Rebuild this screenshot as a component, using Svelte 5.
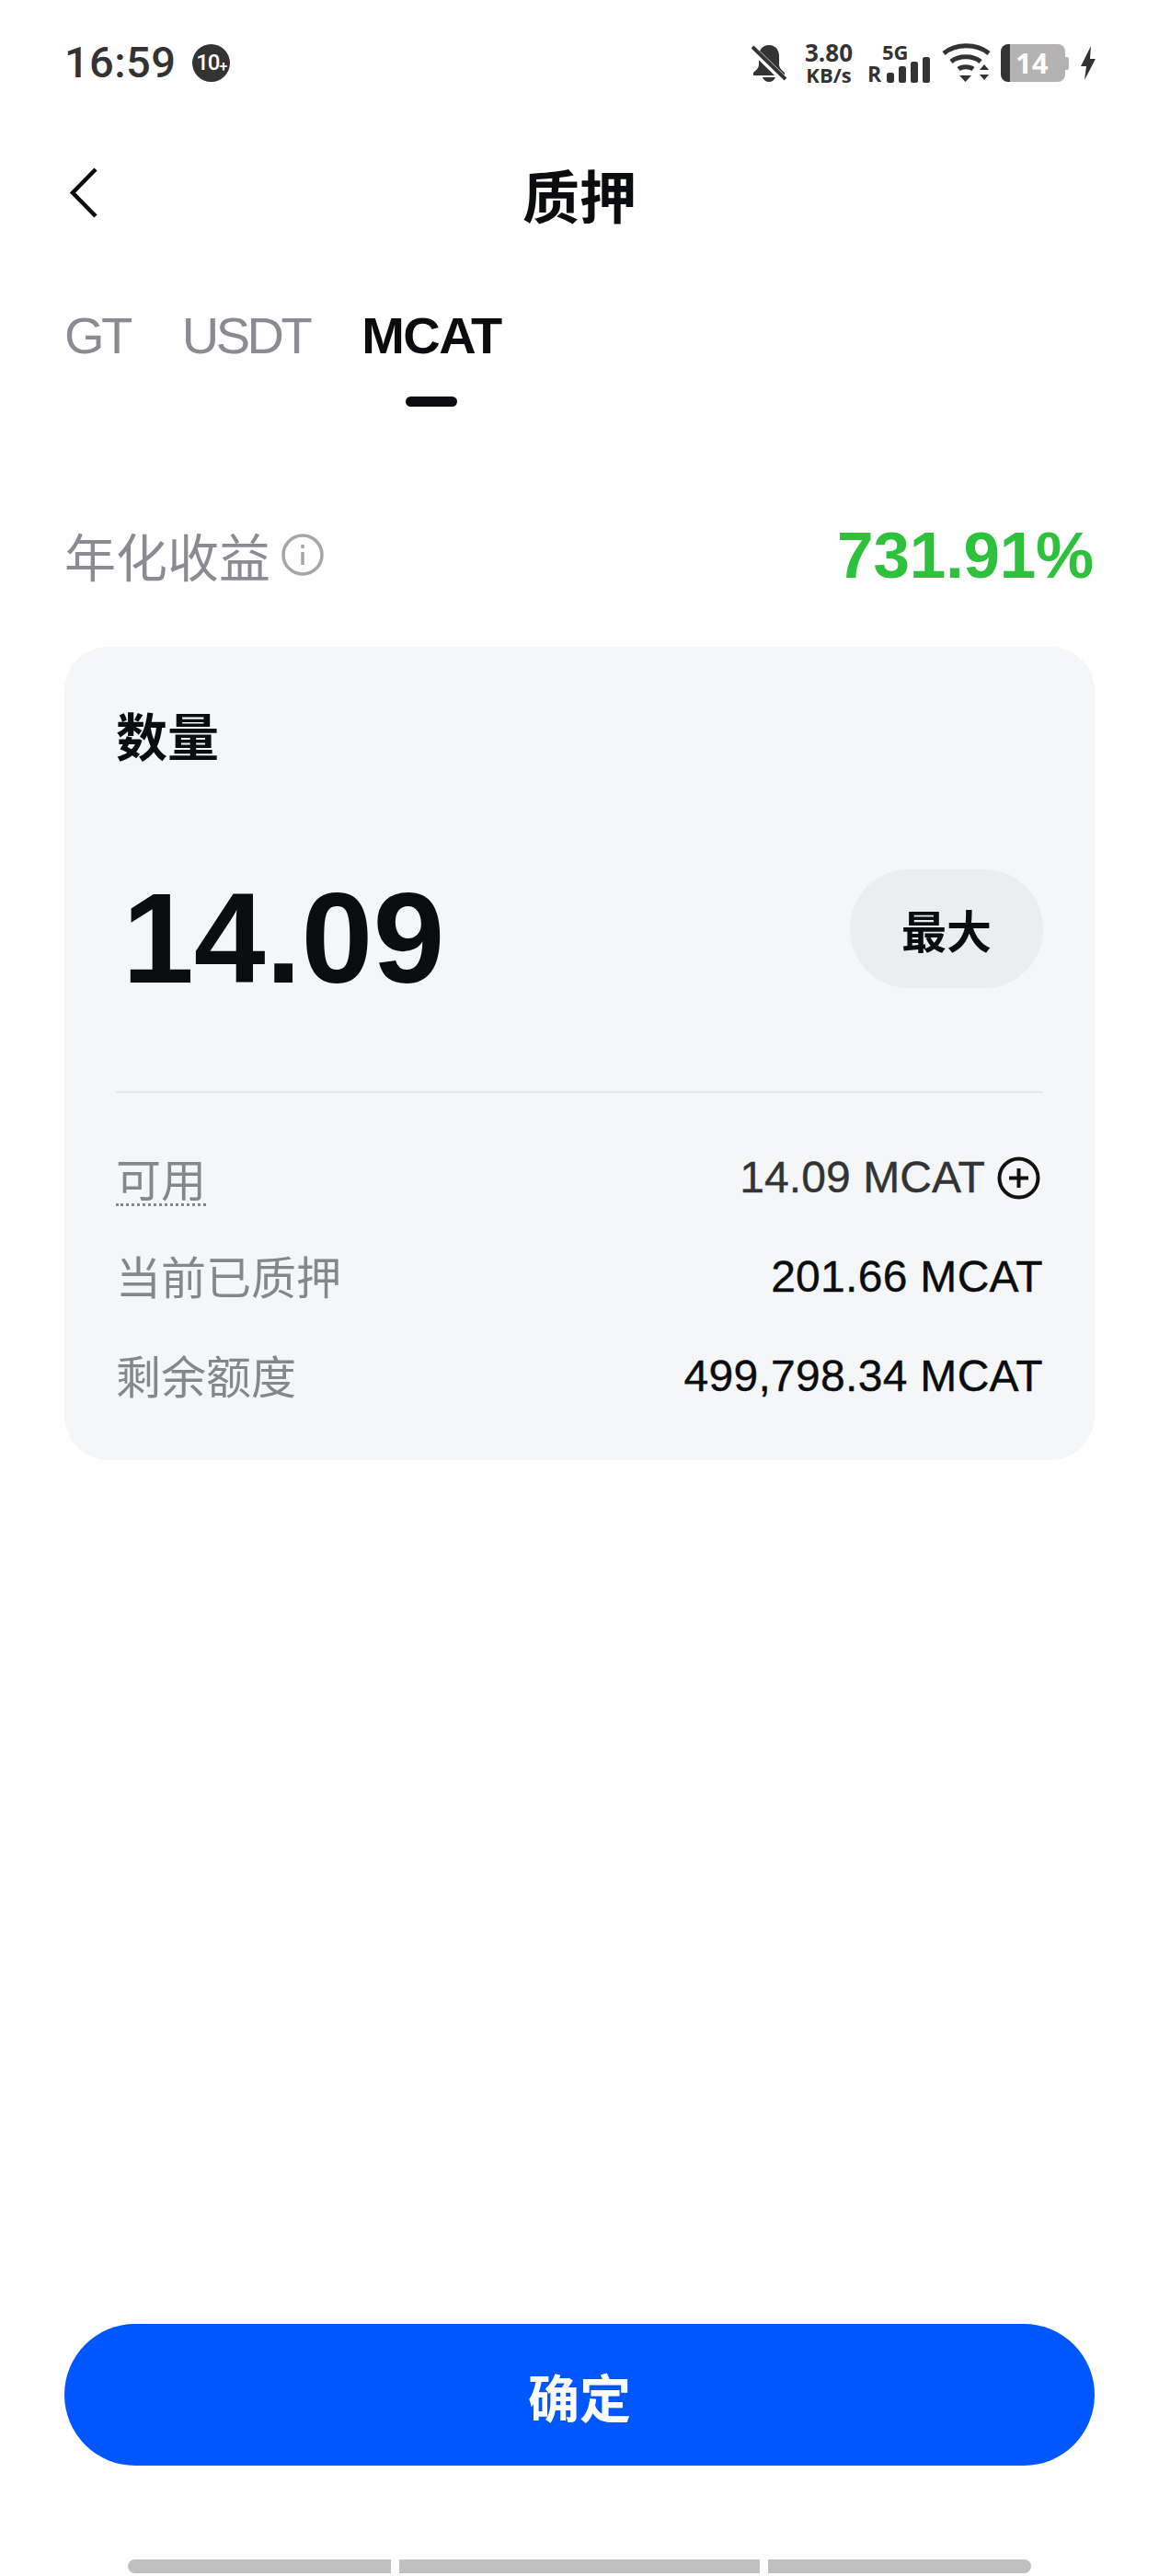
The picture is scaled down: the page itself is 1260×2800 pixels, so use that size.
<script>
  let tabs = ["GT", "USDT", "MCAT"];
  let active = "MCAT";
  let rows = [
    { label: "当前已质押", value: "201.66 MCAT" },
    { label: "剩余额度", value: "499,798.34 MCAT" },
  ];
</script>

<main class="page">
  <header class="status">
    <div class="status-left">
      <span class="time">16:59</span>
      <span class="badge">10<i>+</i></span>
    </div>
    <div class="status-right">
      <svg class="bell" width="38" height="41" viewBox="0 0 38 41">
        <path d="M19 1c7 0 11 5 11 12v9c0 4 3 6 6 9v3H2v-3c3-3 6-5 6-9v-9C8 6 12 1 19 1z" fill="#333" />
        <path d="M12 36h14c-1 3-4 5-7 5s-6-2-7-5z" fill="#333" />
        <path d="M1 5l36 35" stroke="#fff" stroke-width="8" />
        <path d="M1 3l36 35" stroke="#333" stroke-width="4" />
      </svg>
      <div class="speed"><b>3.80</b><b class="unit">KB/s</b></div>
      <div class="signal">
        <span class="five-g">5G</span>
        <span class="roam">R</span>
        <svg width="48" height="28" viewBox="0 0 48 28" fill="#333">
          <rect x="0" y="17" width="8" height="11" rx="2.5" />
          <rect x="13" y="10" width="8" height="18" rx="2.5" />
          <rect x="26" y="5" width="8" height="23" rx="2.5" />
          <rect x="39" y="0" width="8" height="28" rx="2.5" />
        </svg>
      </div>
      <svg class="wifi" width="53" height="42" viewBox="0 0 53 42" fill="none" stroke="#333" stroke-width="5">
        <path d="M2 11C15 0 38 0 51 11" />
        <path d="M10 20C18 13 34 13 42 20" />
        <path d="M18 28c4-3 12-3 16 0" />
        <path d="M19 35h13l-6.500 7z" fill="#333" stroke="none" />
        <path d="M41 29l5-6 5 6zM41 34h10l-5 6z" fill="#333" stroke="none" />
      </svg>
      <div class="battery"><span class="level"></span><span class="pct">14</span><span class="cap"></span></div>
      <svg class="bolt" width="16" height="37" viewBox="0 0 16 37">
        <path d="M11 0L0 22h6L4 37 16 14h-6z" fill="#333" />
      </svg>
    </div>
  </header>

  <nav class="nav">
    <svg class="back" width="31" height="55" viewBox="0 0 31 55" fill="none" stroke="#0a0c0d" stroke-width="4.500">
      <path d="M29 2L4 27.500 29 53" />
    </svg>
    <h1>质押</h1>
  </nav>

  <div class="tabs">
    {#each tabs as tab}
      <div class="tab" class:active={tab === active}>{tab}</div>
    {/each}
  </div>

  <div class="rate">
    <div class="rate-label">
      <span>年化收益</span>
      <svg width="46" height="46" viewBox="0 0 46 46" fill="none" stroke="#a4a6aa" stroke-width="3.500">
        <circle cx="23" cy="23" r="21" />
        <path d="M23 20v14" />
        <path d="M23 12v4" />
      </svg>
    </div>
    <div class="rate-value">731.91%</div>
  </div>

  <section class="card">
    <div class="card-title">数量</div>
    <div class="amount-row">
      <div class="amount">14.09</div>
      <button class="max">最大</button>
    </div>
    <div class="line"></div>
    <div class="row first">
      <span class="label dotted">可用</span>
      <span class="value dim">14.09 MCAT<svg width="47" height="47" viewBox="0 0 47 47" fill="none" stroke="#111" stroke-width="4">
          <circle cx="23.500" cy="23.500" r="21" />
          <path d="M13 23.500h21M23.500 13v21" />
        </svg></span>
    </div>
    {#each rows as row}
      <div class="row">
        <span class="label">{row.label}</span>
        <span class="value">{row.value}</span>
      </div>
    {/each}
  </section>

  <button class="confirm">确定</button>

  <div class="gesture">
    <span></span><span></span><span></span>
  </div>
</main>

<style>
  :global(body) {
    margin: 0;
    background: #fff;
  }

  .page {
    width: 1260px;
    height: 2800px;
    display: flex;
    flex-direction: column;
    box-sizing: border-box;
    padding: 0 70px;
    font-family: "Liberation Sans", "Noto Sans CJK SC", sans-serif;
    color: #0a0c0d;
    overflow: hidden;
  }

  .status {
    height: 136px;
    display: flex;
    justify-content: space-between;
    align-items: center;
    color: #333;
  }

  .status-left {
    display: flex;
    align-items: center;
    gap: 18px;
  }

  .time {
    font-family: Roboto, sans-serif;
    font-weight: 500;
    font-size: 47px;
    letter-spacing: 0.4px;
    line-height: 50px;
  }

  .badge {
    width: 41px;
    height: 41px;
    border-radius: 50%;
    background: #333;
    color: #fff;
    font-family: Roboto, sans-serif;
    font-size: 24px;
    font-weight: 500;
    letter-spacing: -1px;
    display: flex;
    align-items: center;
    justify-content: center;
  }

  .badge i {
    font-style: normal;
    font-size: 16px;
    margin-top: 8px;
  }

  .status-right {
    display: flex;
    align-items: center;
    margin-right: -1px;
  }

  .speed {
    display: flex;
    flex-direction: column;
    align-items: center;
    margin-left: 18px;
    width: 56px;
    font-family: "Open Sans", sans-serif;
    font-size: 26px;
    line-height: 25px;
  }

  .speed .unit {
    font-size: 22px;
    line-height: 22px;
  }

  .signal {
    width: 67px;
    height: 44px;
    margin-left: 16px;
    display: grid;
    grid-template-columns: 19px 48px;
    grid-template-rows: 20px 24px;
    font-family: "Open Sans", sans-serif;
    font-weight: 700;
    align-items: end;
  }

  .five-g {
    grid-column: 1 / 3;
    grid-row: 1;
    margin-left: 14px;
    font-size: 22px;
    line-height: 20px;
  }

  .roam {
    grid-column: 1;
    grid-row: 2;
    margin-left: -2px;
    font-size: 23px;
    line-height: 19px;
  }

  .signal svg {
    grid-column: 2;
    grid-row: 1 / 3;
  }

  .wifi {
    margin-left: 12px;
  }

  .battery {
    margin-left: 11px;
    width: 75px;
    height: 41px;
    display: flex;
  }

  .level {
    width: 10px;
    background: #333;
    border-radius: 8px 0 0 8px;
  }

  .pct {
    width: 60px;
    background: #b3b3b3;
    color: #fff;
    border-radius: 0 8px 8px 0;
    font-family: "Open Sans", sans-serif;
    font-weight: 700;
    font-size: 31px;
    line-height: 40px;
    padding-left: 6px;
    box-sizing: border-box;
  }

  .cap {
    width: 4px;
    height: 14px;
    margin-top: 14px;
    background: #b3b3b3;
    border-radius: 0 2px 2px 0;
  }

  .bolt {
    margin-left: 12px;
  }

  .nav {
    height: 150px;
    position: relative;
    display: flex;
    justify-content: center;
    align-items: center;
  }

  .back {
    position: absolute;
    left: 5px;
    top: 46px;
  }

  h1 {
    margin: 0;
    font-size: 62px;
    line-height: 80px;
    font-weight: 700;
    font-family: "Noto Sans CJK SC", sans-serif;
  }

  .tabs {
    display: flex;
    gap: 57px;
    margin-top: 33px;
    height: 100px;
  }

  .tab {
    position: relative;
    font-size: 56px;
    line-height: 92px;
    height: 92px;
    color: #8a8c91;
    letter-spacing: -3.5px;
  }

  .tab.active {
    color: #0a0c0d;
    font-weight: 700;
    letter-spacing: -1.5px;
  }

  .tab.active::after {
    content: "";
    position: absolute;
    left: 50%;
    margin-left: -28px;
    bottom: -31px;
    width: 56px;
    height: 11px;
    border-radius: 6px;
    background: #0a0c0d;
  }

  .rate {
    display: flex;
    justify-content: space-between;
    align-items: center;
    height: 80px;
    margin-top: 144px;
  }

  .rate-label {
    display: flex;
    align-items: center;
    gap: 12px;
    font-family: "Noto Sans CJK SC", sans-serif;
    font-size: 56px;
    color: #8a8c91;
    line-height: 80px;
  }

  .rate-value {
    font-size: 71px;
    font-weight: 700;
    color: #2dc13c;
    margin-right: 1px;
    letter-spacing: -0.2px;
  }

  .card {
    margin-top: 60px;
    height: 884px;
    box-sizing: border-box;
    background: #f5f6f8;
    border-radius: 48px;
    padding: 60px 56px 0;
  }

  .card-title {
    font-family: "Noto Sans CJK SC", sans-serif;
    font-size: 56px;
    font-weight: 700;
    line-height: 70px;
  }

  .amount-row {
    display: flex;
    justify-content: space-between;
    align-items: center;
    margin-top: 112px;
    height: 129px;
  }

  .amount {
    font-size: 140px;
    font-weight: 700;
    line-height: 129px;
    margin-left: 7px;
    margin-top: 20px;
  }

  .max {
    width: 210px;
    height: 129px;
    border: none;
    border-radius: 64px;
    background: #ecedef;
    color: #0a0c0d;
    font-family: "Noto Sans CJK SC", sans-serif;
    font-size: 49px;
    font-weight: 700;
    padding: 0;
  }

  .line {
    height: 2px;
    background: #e4e6e9;
    margin-top: 112px;
  }

  .row {
    display: flex;
    justify-content: space-between;
    align-items: center;
    height: 60px;
    margin-top: 48px;
  }

  .row.first {
    margin-top: 62px;
  }

  .label {
    font-family: "Noto Sans CJK SC", sans-serif;
    font-size: 49px;
    color: #85878c;
    line-height: 60px;
    margin-bottom: 4px;
  }

  .label.dotted {
    border-bottom: 3px dotted #85878c;
    height: 58px;
    margin-bottom: 0;
  }

  .value {
    font-size: 48px;
    line-height: 60px;
    display: flex;
    align-items: center;
    letter-spacing: 0.3px;
    -webkit-text-stroke: 0.4px;
  }

  .value svg {
    margin-left: 13px;
    margin-right: 3px;
  }

  .value.dim {
    color: #333;
    letter-spacing: 0.1px;
  }

  .confirm {
    margin-top: auto;
    height: 154px;
    width: 100%;
    flex: none;
    border: none;
    border-radius: 77px;
    background: #0056ff;
    color: #fff;
    font-family: "Noto Sans CJK SC", sans-serif;
    font-size: 56px;
    font-weight: 700;
    padding: 0;
  }

  .gesture {
    display: flex;
    justify-content: center;
    gap: 9px;
    margin-top: 102px;
    margin-bottom: 3px;
    flex: none;
  }

  .gesture span {
    height: 15px;
    width: 286px;
    background: #c0c0c0;
  }

  .gesture span:nth-child(1) {
    border-radius: 8px 0 0 8px;
  }

  .gesture span:nth-child(2) {
    width: 392px;
  }

  .gesture span:nth-child(3) {
    border-radius: 0 8px 8px 0;
  }
</style>
